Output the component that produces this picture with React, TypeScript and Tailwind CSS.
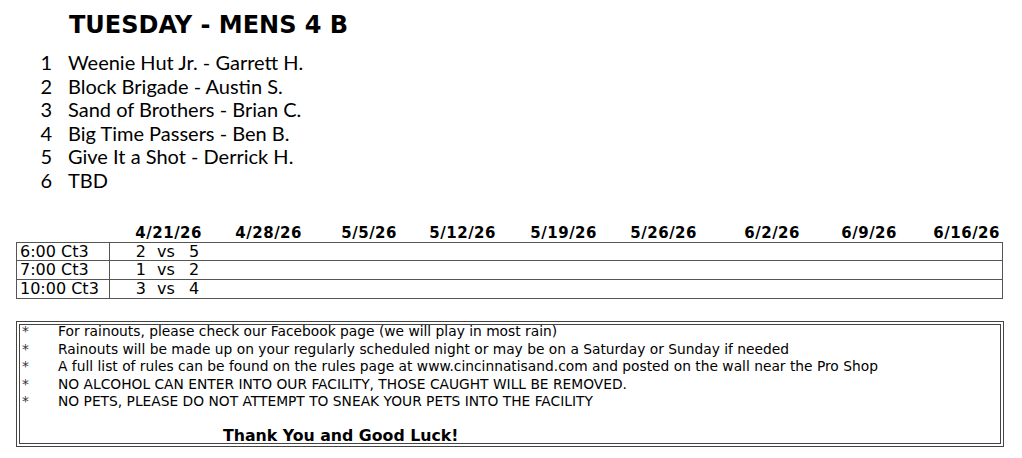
import React from "react";

const teams = [
  "Weenie Hut Jr. - Garrett H.",
  "Block Brigade - Austin S.",
  "Sand of Brothers - Brian C.",
  "Big Time Passers - Ben B.",
  "Give It a Shot - Derrick H.",
  "TBD",
];

const dates = [
  { d: "4/21/26", w: "w-[95px]" },
  { d: "4/28/26", w: "w-[100px]" },
  { d: "5/5/26", w: "w-[95px]" },
  { d: "5/12/26", w: "w-[99px]" },
  { d: "5/19/26", w: "w-[101px]" },
  { d: "5/26/26", w: "w-[100px]" },
  { d: "6/2/26", w: "w-[103px]" },
  { d: "6/9/26", w: "w-[97px]" },
  { d: "6/16/26", w: "w-[103px]" },
];

const games = [
  { time: "6:00 Ct3", a: "2", b: "5" },
  { time: "7:00 Ct3", a: "1", b: "2" },
  { time: "10:00 Ct3", a: "3", b: "4" },
];

const rules = [
  "For rainouts, please check our Facebook page (we will play in most rain)",
  "Rainouts will be made up on your regularly scheduled night or may be on a Saturday or Sunday if needed",
  "A full list of rules can be found on the rules page at www.cincinnatisand.com and posted on the wall near the Pro Shop",
  "NO ALCOHOL CAN ENTER INTO OUR FACILITY, THOSE CAUGHT WILL BE REMOVED.",
  "NO PETS, PLEASE DO NOT ATTEMPT TO SNEAK YOUR PETS INTO THE FACILITY",
];

export default function App() {
  return (
    <div className="w-[1022px] h-[458px] bg-white text-black overflow-hidden">
      <h1 className="pl-[69px] pt-[10px] h-[51px] text-[24px] leading-[30px] font-bold font-['DejaVu_Sans',sans-serif]">
        TUESDAY - MENS 4 B
      </h1>

      <ol className="font-['Lato',sans-serif] text-[20px] leading-[23.5px]">
        {teams.map((t, i) => (
          <li key={t} className="flex">
            <span className="w-[52px] text-right">{i + 1}</span>
            <span className="pl-[16px]">{t}</span>
          </li>
        ))}
      </ol>

      <div className="mt-[32px] ml-[16px] w-[987px] font-['DejaVu_Sans',sans-serif]">
        <div className="flex h-[18px] items-end text-[15px] leading-[18px] font-bold tracking-[0.5px]">
          <div className="w-[94px]" />
          {dates.map((c) => (
            <div key={c.d} className={`${c.w} text-right pr-[3px]`}>
              {c.d}
            </div>
          ))}
        </div>
        <div className="border border-[#555] border-b-0">
          {games.map((g, i) => (
            <div
              key={g.time}
              className={`flex ${i === 0 ? "h-[18px]" : "h-[19px]"} border-b border-[#555] text-[16px] leading-[18px]`}
            >
              <div className="w-[93px] pl-[3px] border-r border-[#555]">{g.time}</div>
              <div className="flex">
                <span className="w-[36px] text-right">{g.a}</span>
                <span className="pl-[11px] w-[43px]">vs</span>
                <span>{g.b}</span>
              </div>
            </div>
          ))}
        </div>
      </div>

      <div className="mt-[22px] ml-[16px] w-[988px] h-[126px] border-[4px] border-double border-[#444] font-['DejaVu_Sans',sans-serif] text-[13.8px] leading-[17.5px]">
        <div className="-mt-[2px]">
          {rules.map((r) => (
            <div key={r} className="flex">
              <span className="w-[38px] pl-[2px] text-[#333]">*</span>
              <span>{r}</span>
            </div>
          ))}
          <div className="mt-[16px] pl-[203px] text-[15.75px] leading-[18px] font-bold">
            Thank You and Good Luck!
          </div>
        </div>
      </div>
    </div>
  );
}
